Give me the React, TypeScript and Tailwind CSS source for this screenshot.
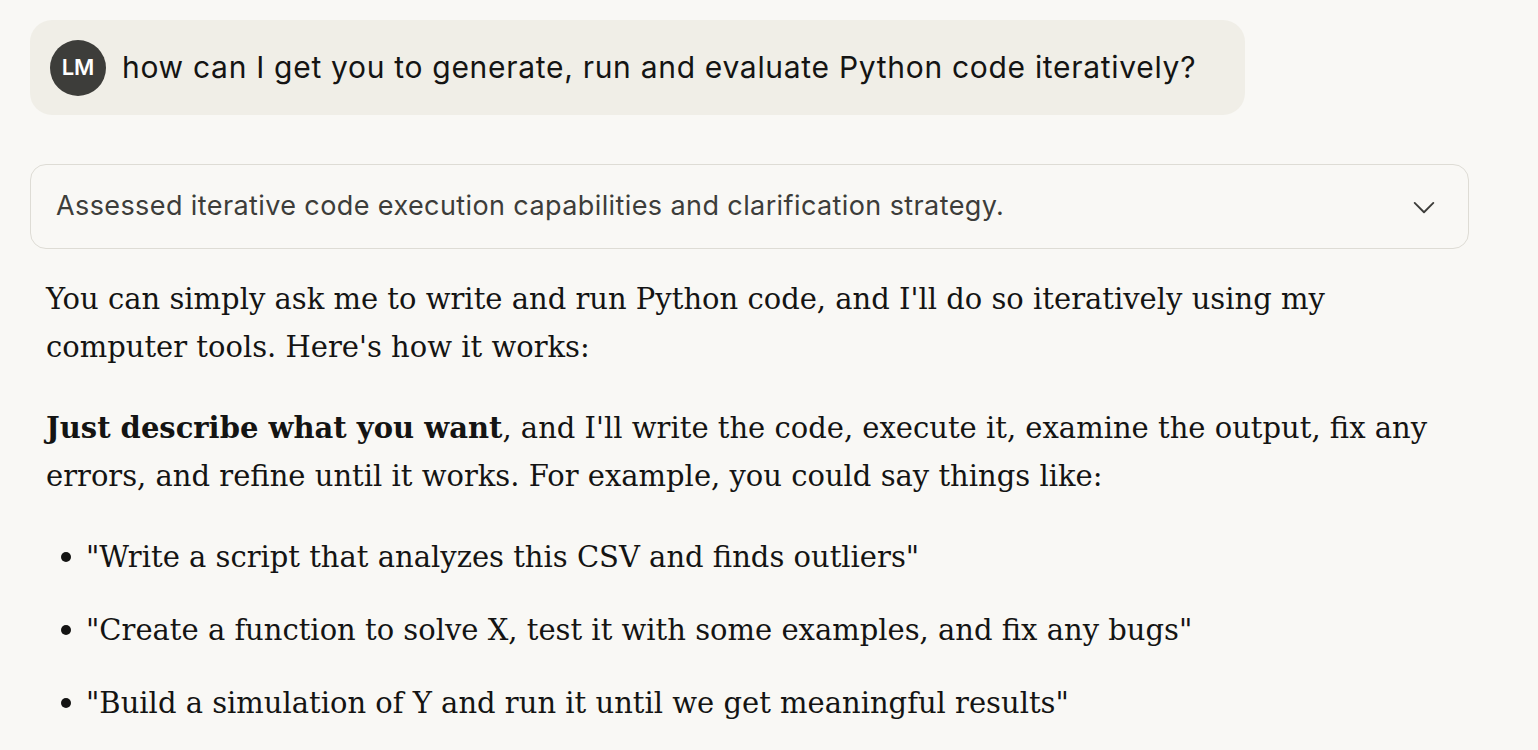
import React from "react";

const sans = { fontFamily: "Inter, 'Noto Sans', sans-serif" };

export default function App() {
  return (
    <div className="min-h-[750px] w-full bg-[#f9f8f5] text-[#141413]">
      <div className="pt-[20px] pl-[30px]">
        <div className="flex h-[95px] w-[1215px] items-center gap-[16px] rounded-[22px] bg-[#f0eee7] pl-[20px]" style={sans}>
          <div className="flex h-[56px] w-[56px] shrink-0 items-center justify-center rounded-full bg-[#3d3d3a] text-[22px] font-semibold text-white">
            LM
          </div>
          <div className="-mt-[2px] text-[30px] leading-[40px] tracking-[0.7px] text-[#141413]">
            how can I get you to generate, run and evaluate Python code iteratively?
          </div>
        </div>

        <div className="mt-[49px] flex h-[85px] w-[1439px] items-center justify-between rounded-[16px] border border-[#dedcd5] pl-[25px] pr-[30px]" style={sans}>
          <div className="text-[27px] tracking-[0.4px] text-[#3d3d3a]">Assessed iterative code execution capabilities and clarification strategy.</div>
          <svg width="28" height="28" viewBox="0 0 24 24" fill="none" stroke="#3d3d3a" strokeWidth="1.6" strokeLinecap="round" strokeLinejoin="round">
            <path d="M4 8.5l8 8 8-8" />
          </svg>
        </div>

        <div className="w-[1470px] pl-[16px] pt-[26px] text-[29px] leading-[48px] text-[#141413]" style={{ fontFamily: "'DejaVu Serif', 'Liberation Serif', serif" }}>
          <p>
            You can simply ask me to write and run Python code, and I'll do so iteratively using my
            <br />
            computer tools. Here's how it works:
          </p>
          <p className="mt-[33px]">
            <strong className="font-bold">Just describe what you want</strong>, and I'll write the code, execute it, examine the output, fix any
            <br />
            errors, and refine until it works. For example, you could say things like:
          </p>
          <ul className="mt-[33px] flex flex-col gap-[25px]">
            {[
              '"Write a script that analyzes this CSV and finds outliers"',
              '"Create a function to solve X, test it with some examples, and fix any bugs"',
              '"Build a simulation of Y and run it until we get meaningful results"',
            ].map((t) => (
              <li key={t} className="flex items-center">
                <span className="ml-[15px] mr-[15px] h-[10px] w-[10px] shrink-0 rounded-full bg-[#141413]" />
                <span>{t}</span>
              </li>
            ))}
          </ul>
        </div>
      </div>
    </div>
  );
}
